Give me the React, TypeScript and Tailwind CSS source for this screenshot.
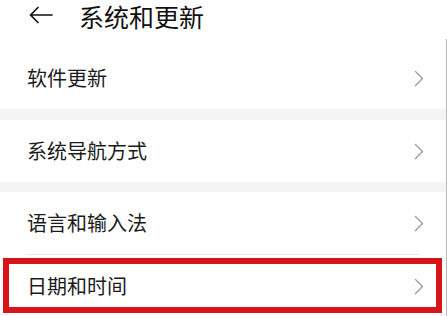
import React from "react";

const Chevron = () => (
  <svg width="10" height="17" viewBox="0 0 10 17" fill="none" className="shrink-0">
    <path d="M1.5 1.5 L8.5 8.5 L1.5 15.5" stroke="#9a9a9a" strokeWidth="1.4" strokeLinecap="round" strokeLinejoin="round" />
  </svg>
);

const Row = ({ label, highlight = false, divider = false }: { label: string; highlight?: boolean; divider?: boolean }) => (
  <div className="relative">
    {divider && <div className="mx-[26px] h-px bg-[#e8e8e8]" />}
    <div className="flex h-[62px] items-center justify-between pl-[27px] pr-[22px]">
      <span className="text-[20px] leading-none text-[#1b1b1b]">{label}</span>
      <Chevron />
    </div>
    {highlight && (
      <div className="pointer-events-none absolute left-[3px] right-[4px] top-[4px] h-[55px] border-[6px] border-[#d8141b]" />
    )}
  </div>
);

export default function App() {
  return (
    <div
      className="h-[316px] w-[447px] overflow-hidden bg-white"
      style={{ fontFamily: '"Noto Sans CJK SC", "Noto Sans", sans-serif' }}
    >
      <div className="flex h-[39px] items-start pt-[2px]">
        <svg width="24" height="18" viewBox="0 0 24 18" fill="none" className="ml-[29px] mt-[4px]">
          <path d="M23 9 H1.5 M9 1.5 L1.5 9 L9 16.5" stroke="#111" strokeWidth="1.7" strokeLinecap="round" strokeLinejoin="round" />
        </svg>
        <span className="ml-[26px] text-[25px] leading-[28px] text-[#111]">系统和更新</span>
      </div>
      <div className="h-[277px] border-r border-[#b8b8b8] bg-[#f4f4f4]">
        <div className="bg-white pt-[8px]">
          <Row label="软件更新" />
        </div>
        <div className="mt-[11px] bg-white">
          <Row label="系统导航方式" />
        </div>
        <div className="mt-[10px] bg-white">
          <Row label="语言和输入法" />
          <Row label="日期和时间" divider highlight />
        </div>
      </div>
    </div>
  );
}
